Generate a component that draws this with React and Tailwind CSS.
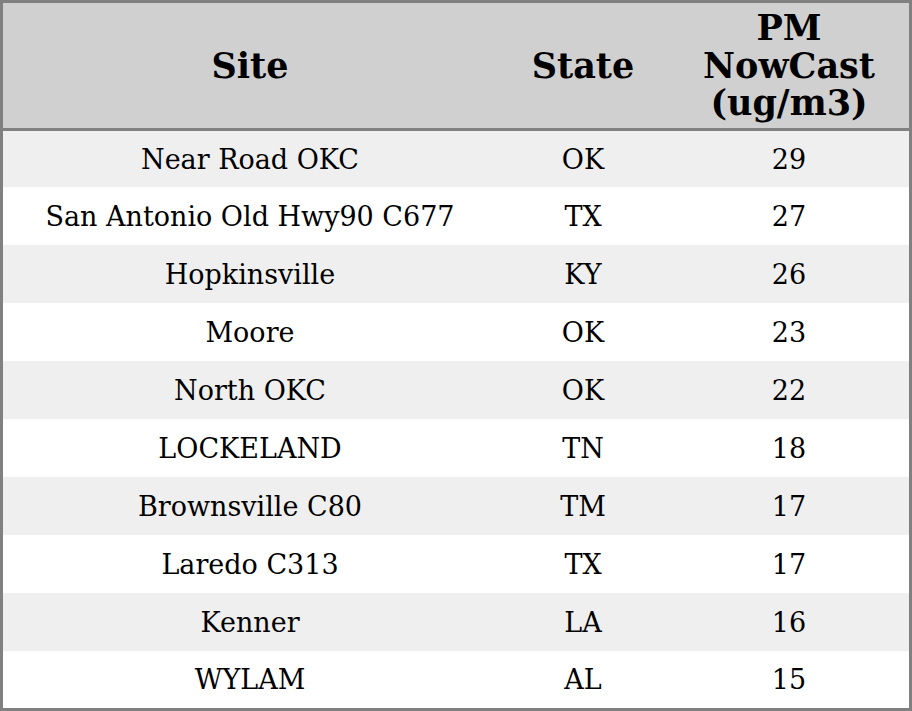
import React from "react";

const rows = [
  ["Near Road OKC", "OK", "29"],
  ["San Antonio Old Hwy90 C677", "TX", "27"],
  ["Hopkinsville", "KY", "26"],
  ["Moore", "OK", "23"],
  ["North OKC", "OK", "22"],
  ["LOCKELAND", "TN", "18"],
  ["Brownsville C80", "TM", "17"],
  ["Laredo C313", "TX", "17"],
  ["Kenner", "LA", "16"],
  ["WYLAM", "AL", "15"],
];

const heights = ["h-[56px]", "h-[58px]", "h-[58px]", "h-[58px]", "h-[58px]", "h-[58px]", "h-[58px]", "h-[58px]", "h-[58px]", "h-[57px]"];

export default function App() {
  return (
    <div className="w-[912px] h-[711px] bg-white" style={{ fontFamily: "'DejaVu Serif', serif" }}>
      <div className="w-[912px] h-[711px] border-[3px] border-[#808080] flex flex-col text-black">
        <div className="h-[128px] bg-[#d0d0d0] border-b-[3px] border-[#808080] flex items-center font-bold text-[35px] leading-[37.5px] text-center">
          <div className="w-[494px]">Site</div>
          <div className="w-[172px]">State</div>
          <div className="w-[240px]">PM<br />NowCast<br />(ug/m3)</div>
        </div>
        {rows.map((r, i) => (
          <div
            key={i}
            className={`${heights[i]} ${i % 2 === 0 ? "bg-[#efefef]" : "bg-white"} flex items-center text-[27px] leading-[32px] text-center pt-[1px]`}
          >
            <div className="w-[494px]">{r[0]}</div>
            <div className="w-[172px]">{r[1]}</div>
            <div className="w-[240px]">{r[2]}</div>
          </div>
        ))}
      </div>
    </div>
  );
}
